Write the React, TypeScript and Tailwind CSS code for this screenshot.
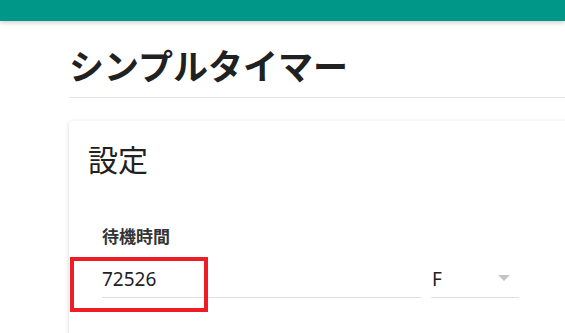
import React from 'react';

export default function App() {
  return (
    <div
      className="relative w-[565px] h-[333px] overflow-hidden bg-white text-[#212121]"
      style={{ fontFamily: '"Noto Sans", "Noto Sans CJK JP", sans-serif' }}
    >
      {/* App bar */}
      <div className="h-[21px] bg-[#009688] shadow-[0_2px_4px_rgba(0,0,0,0.18)]" />

      <div className="pl-[69px]">
        {/* Page title */}
        <div className="mt-[25px] pb-[10px] border-b border-[#e6e6e6]">
          <h1 className="text-[35px] leading-[41px] font-bold">シンプルタイマー</h1>
        </div>

        {/* Settings card */}
        <div className="mt-[23px] w-[600px] h-[260px] rounded-[4px] bg-white shadow-[0_1px_4px_rgba(0,0,0,0.16)] pl-[19px] pt-[21px]">
          <h2 className="text-[30px] leading-[36px] font-normal">設定</h2>

          <div className="pl-[14px] mt-[46px]">
            <label className="block text-[17px] leading-[25px] font-bold text-[#333]">待機時間</label>
            <div className="flex items-end gap-[10px] mt-[17px]">
              <div className="w-[319px] h-[32px] border-b border-[#dedede] flex items-start pt-[2px]">
                <span className="text-[19px] leading-[22px] text-[#222]">72526</span>
              </div>
              <div className="w-[88px] h-[32px] border-b border-[#dedede] flex items-start justify-between pr-[9px] pt-[2px]">
                <span className="text-[19px] leading-[22px] text-[#222] pl-[1px]">F</span>
                <svg width="12" height="7" viewBox="0 0 12 7" className="mt-[7px]">
                  <path d="M0 0 L12 0 L6 6 Z" fill="#c4c4c4" />
                </svg>
              </div>
            </div>
          </div>
        </div>
      </div>

      {/* Red highlight annotation */}
      <div className="absolute left-[70px] top-[257px] w-[138px] h-[55px] border-4 border-[#ee1c25]" />
    </div>
  );
}
